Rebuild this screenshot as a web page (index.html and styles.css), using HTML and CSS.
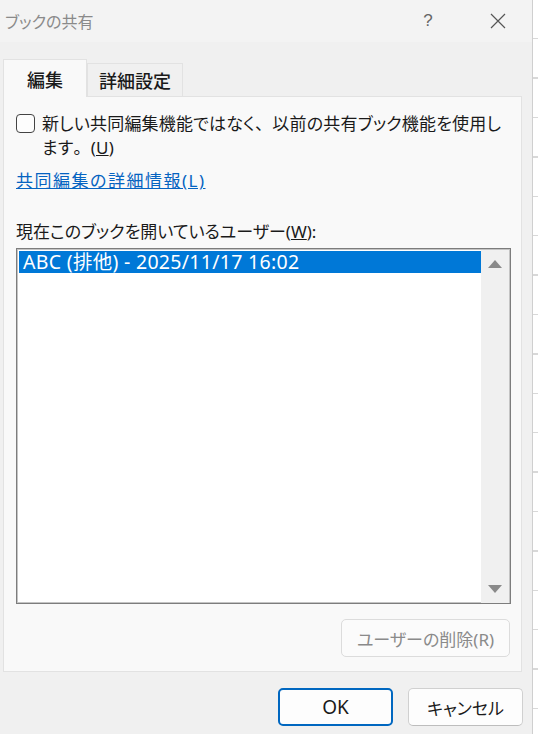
FILE: index.html
```html
<!DOCTYPE html>
<html>
  <head>
    <link rel="stylesheet" href="styles.css">
    <title>ブックの共有</title>
  </head>
  <body>
    <div class="dialog">
      <div class="titlebar">
        <span class="title">ブックの共有</span>
        <span class="help">?</span>
        <span class="close">
          <svg width="16" height="16" viewBox="0 0 16 16"><path d="M1 1 L15 15 M15 1 L1 15" stroke="#555" stroke-width="1.2" fill="none"/></svg>
        </span>
      </div>

      <div class="tabs">
        <div class="tab active">編集</div>
        <div class="tab">詳細設定</div>
      </div>

      <div class="panel">
        <div class="check-row">
          <span class="checkbox"></span>
          <p class="check-text">新しい共同編集機能ではなく<span class="full">、</span>以前の共有ブック機能を使用します<span class="full">。</span>(<u>U</u>)</p>
        </div>

        <p class="link">共同編集の詳細情報(L)</p>

        <p class="label">現在このブックを開いているユーザー(<u>W</u>):</p>

        <div class="listbox">
          <div class="items">
            <div class="item selected">ABC (排他) - 2025/11/17 16:02</div>
          </div>
          <div class="scrollbar">
            <span class="arrow up"></span>
            <span class="arrow down"></span>
          </div>
        </div>

        <div class="remove-row">
          <button class="btn disabled">ユーザーの削除(R)</button>
        </div>
      </div>

      <div class="footer">
        <button class="btn ok">OK</button>
        <button class="btn">キャンセル</button>
      </div>
    </div>
    <div class="sheet"></div>
  </body>
</html>
```

FILE: styles.css
```css
body{
  margin: 0;
  height: 734px;
  display: flex;
  background-color: white;
  font-family: "Noto Sans", "Noto Sans CJK JP", sans-serif;
  font-feature-settings: "palt";
  color: #1a1a1a;
  overflow: hidden;
}

p{
  margin: 0;
}

.dialog{
  width: 532px;
  background-color: #f0f0f0;
  border-right: 1px solid #cfcfcf;
  display: flex;
  flex-direction: column;
}

.titlebar{
  height: 42px;
  display: flex;
  align-items: center;
  padding-left: 5px;
  background-color: #f3f3f3;
}

.title{
  font-size: 16px;
  color: #8a8a8a;
  flex: 1;
}

.help{
  font-family: "Liberation Sans", sans-serif;
  font-size: 17px;
  color: #666;
  width: 20px;
  text-align: center;
  margin-right: 52px;
}

.close{
  display: flex;
  margin-right: 26px;
}

.tabs{
  display: flex;
  align-items: flex-end;
  padding-left: 3px;
  margin-top: 17px;
  height: 37px;
}

.tab{
  height: 33px;
  box-sizing: border-box;
  padding: 0 11px;
  border: 1px solid #e2e2e2;
  border-bottom: none;
  font-size: 18px;
  font-weight: 500;
  display: flex;
  align-items: center;
  background-color: #f0f0f0;
}

.tab.active{
  height: 38px;
  width: 84px;
  justify-content: center;
  background-color: #f9f9f9;
  margin-bottom: -1px;
  position: relative;
}

.panel{
  margin-left: 3px;
  width: 519px;
  height: 576px;
  box-sizing: border-box;
  background-color: #f9f9f9;
  border: 1px solid #e2e2e2;
  padding: 15px 10px 0 12px;
  display: flex;
  flex-direction: column;
}

.check-row{
  display: flex;
  gap: 7px;
}

.checkbox{
  width: 19px;
  height: 19px;
  box-sizing: border-box;
  border: 1.5px solid #444;
  border-radius: 4px;
  background-color: #fdfdfd;
  margin-top: 2px;
  flex-shrink: 0;
}

.check-text{
  font-size: 17px;
  line-height: 24px;
  letter-spacing: 0.2px;
}

.full{
  font-feature-settings: normal;
}

.link{
  font-size: 17px;
  line-height: 24px;
  letter-spacing: 1.5px;
  color: #0563c1;
  text-decoration: underline;
  margin-top: 9px;
}

.label{
  font-size: 17px;
  line-height: 24px;
  margin-top: 27px;
}

.listbox{
  margin-top: 4px;
  width: 495px;
  height: 356px;
  box-sizing: border-box;
  border: 1px solid #7d7d7d;
  box-shadow: inset 0 0 0 1px #c4c4c4;
  background-color: white;
  display: flex;
  padding: 2px 1px 1px 2px;
}

.items{
  flex: 1;
}

.item{
  height: 22px;
  line-height: 22px;
  padding-left: 4px;
  font-size: 19.5px;
  letter-spacing: 0.3px;
  font-feature-settings: normal;
}

.selected{
  background-color: #0078d7;
  color: white;
}

.scrollbar{
  width: 28px;
  background-color: #f0f0f0;
  margin: -1px 0 -1px 0;
  display: flex;
  flex-direction: column;
  justify-content: space-between;
  align-items: center;
  padding: 10px 0 10px 0;
}

.arrow{
  width: 0;
  height: 0;
  border-left: 7px solid transparent;
  border-right: 7px solid transparent;
}

.up{
  border-bottom: 8px solid #8a8a8a;
}

.down{
  border-top: 8px solid #8a8a8a;
}

.remove-row{
  display: flex;
  justify-content: flex-end;
  margin-top: 15px;
  padding-right: 1px;
}

.btn{
  font-family: "Noto Sans", "Noto Sans CJK JP", sans-serif;
  font-feature-settings: "palt";
  font-size: 17px;
  height: 38px;
  box-sizing: border-box;
  background-color: #fdfdfd;
  border: 1px solid #d0d0d0;
  border-bottom-color: #bdbdbd;
  border-radius: 5px;
  color: #1a1a1a;
  padding: 0;
}

.disabled{
  width: 169px;
  color: #8a8a8a;
  background-color: #fbfbfb;
  border-color: #dcdcdc;
}

.footer{
  display: flex;
  justify-content: flex-end;
  gap: 15px;
  margin-top: 16px;
  padding-right: 9px;
}

.footer .btn{
  width: 115px;
}

.ok{
  border: 2px solid #0067c0;
  font-size: 19px;
}

.sheet{
  flex: 1;
  background-color: white;
  background-image: repeating-linear-gradient(to bottom, white 0, white 38px, #d8d8d8 38px, #d8d8d8 39.4px);
}
```
